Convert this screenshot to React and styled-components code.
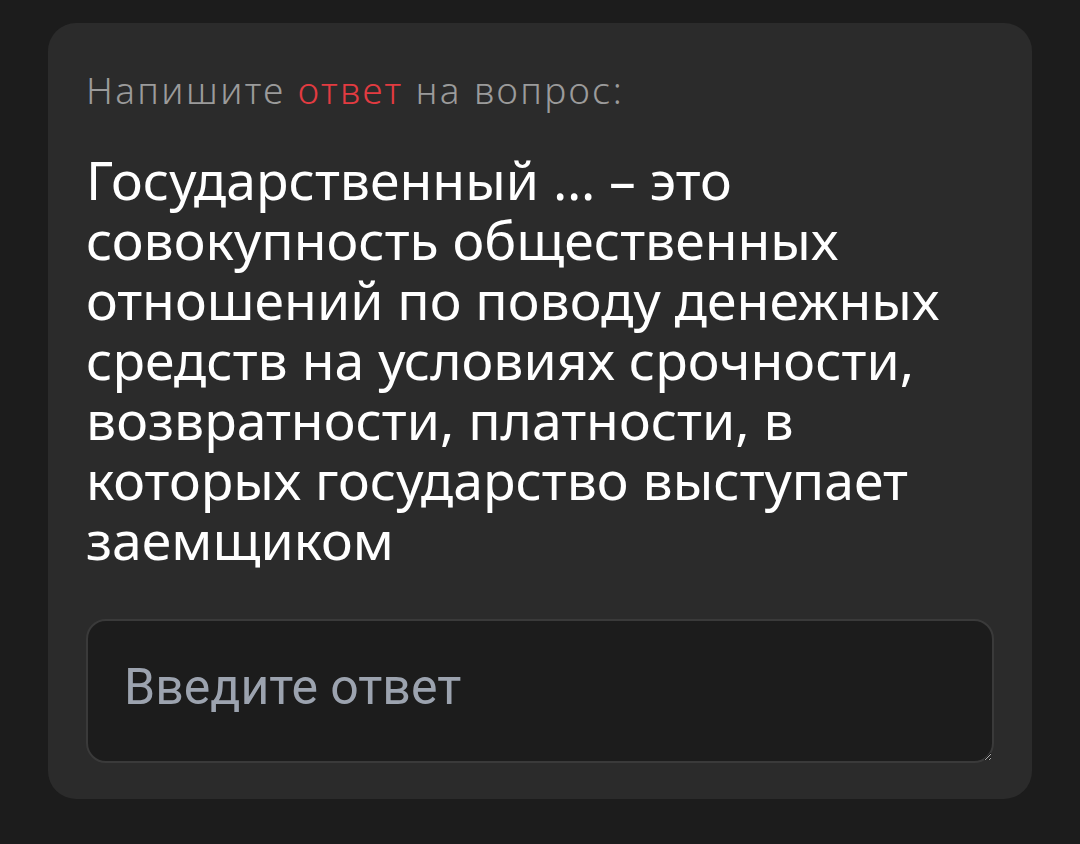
import React from 'react'
import styled, { createGlobalStyle } from 'styled-components'

const GlobalStyle = createGlobalStyle`
  html, body {
    margin: 0;
    padding: 0;
    background: #1c1c1c;
  }
`

//------------------- page ---------------------//
const Page = styled.div`
  width: 1080px;
  min-height: 844px;
  box-sizing: border-box;
  padding: 23px 48px;
  background: #1c1c1c;
`

//------------------- question card ---------------------//
const Card = styled.div`
  background: #2b2b2b;
  border-radius: 28px;
  padding: 46px 38px 36px;
  display: flex;
  flex-direction: column;
`

const Hint = styled.div`
  font-family: "Noto Sans", sans-serif;
  font-weight: 300;
  font-size: 37px;
  line-height: 42px;
  letter-spacing: 2.4px;
  color: #9b9b9b;
`

const Accent = styled.span`
  color: #e23b41;
`

const Question = styled.div`
  margin-top: 39px;
  font-family: "Noto Sans", sans-serif;
  font-weight: 400;
  font-size: 53.5px;
  line-height: 60px;
  color: #ffffff;
`

//------------------- answer field ---------------------//
const Answer = styled.textarea`
  margin-top: 49px;
  height: 144px;
  box-sizing: border-box;
  padding: 37px 36px;
  background: #1c1c1c;
  border: 2px solid #3a3a3a;
  border-radius: 20px;
  font-family: Roboto, sans-serif;
  font-size: 50px;
  color: #e5e5e5;
  outline: none;
  resize: vertical;
  &::placeholder {
    color: #9ca3af;
  }
`

const App = () => {
  return (
    <>
      <GlobalStyle />
      <Page>
        <Card>
          <Hint>
            Напишите <Accent>ответ</Accent> на вопрос:
          </Hint>
          <Question>
            Государственный … – это совокупность общественных отношений по поводу денежных средств на условиях срочности, возвратности, платности, в которых государство выступает заемщиком
          </Question>
          <Answer placeholder="Введите ответ" />
        </Card>
      </Page>
    </>
  )
}

export default App
